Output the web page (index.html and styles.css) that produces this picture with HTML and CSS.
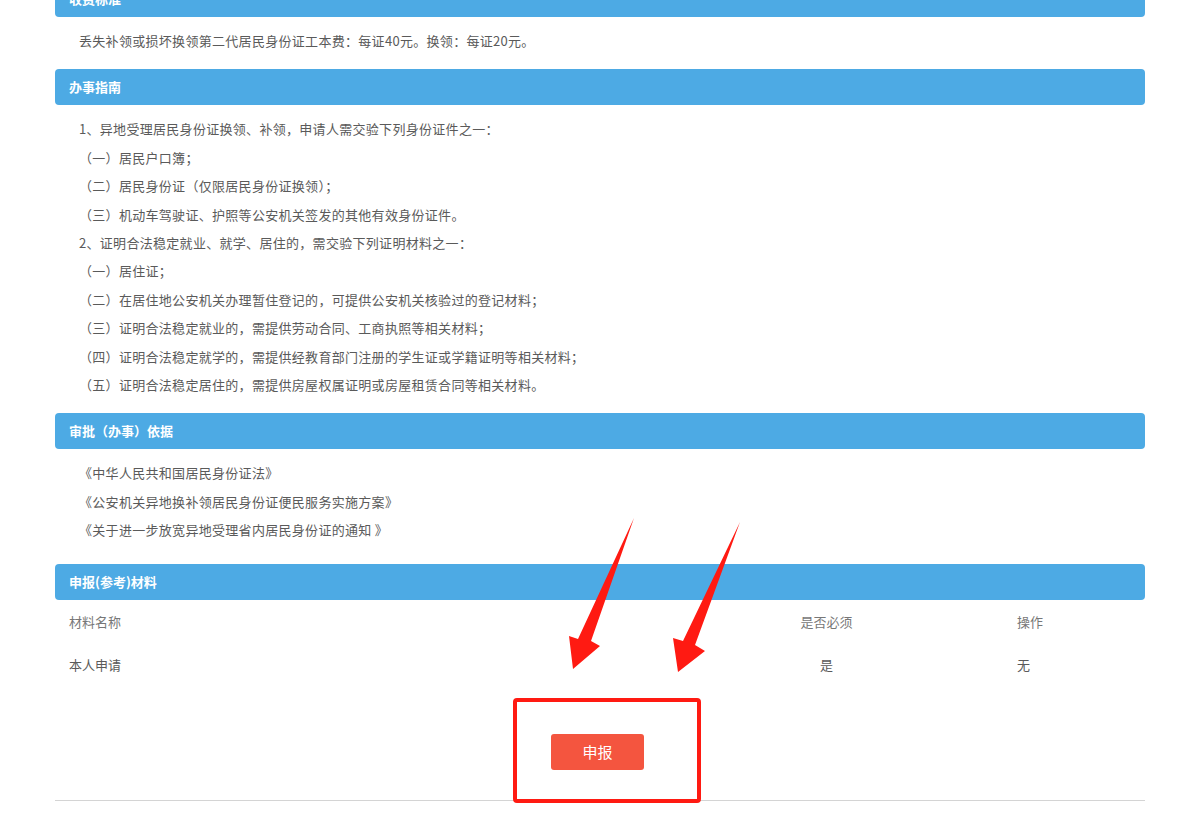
FILE: index.html
```html
<!DOCTYPE html>
<html lang="zh-CN">
<head>
<meta charset="utf-8">
<title>办事指南</title>
<link rel="stylesheet" href="styles.css">
</head>
<body>
<div class="page">
  <section class="sec">
    <div class="sec-head">收费标准</div>
    <div class="sec-body">
      <p>丢失补领或损坏换领第二代居民身份证工本费：每证40元。换领：每证20元。</p>
    </div>
  </section>

  <section class="sec">
    <div class="sec-head">办事指南</div>
    <div class="sec-body">
      <p>1、异地受理居民身份证换领、补领，申请人需交验下列身份证件之一：</p>
      <p>（一）居民户口簿；</p>
      <p>（二）居民身份证（仅限居民身份证换领）；</p>
      <p>（三）机动车驾驶证、护照等公安机关签发的其他有效身份证件。</p>
      <p>2、证明合法稳定就业、就学、居住的，需交验下列证明材料之一：</p>
      <p>（一）居住证；</p>
      <p>（二）在居住地公安机关办理暂住登记的，可提供公安机关核验过的登记材料；</p>
      <p>（三）证明合法稳定就业的，需提供劳动合同、工商执照等相关材料；</p>
      <p>（四）证明合法稳定就学的，需提供经教育部门注册的学生证或学籍证明等相关材料；</p>
      <p>（五）证明合法稳定居住的，需提供房屋权属证明或房屋租赁合同等相关材料。</p>
    </div>
  </section>

  <section class="sec">
    <div class="sec-head">审批（办事）依据</div>
    <div class="sec-body sec-body-basis">
      <p>《中华人民共和国居民身份证法》</p>
      <p>《公安机关异地换补领居民身份证便民服务实施方案》</p>
      <p>《关于进一步放宽异地受理省内居民身份证的通知 》</p>
    </div>
  </section>

  <section class="sec">
    <div class="sec-head">申报(参考)材料</div>
    <div class="mtable">
      <div class="mrow mrow-head">
        <div class="mcell c1">材料名称</div>
        <div class="mcell c2">是否必须</div>
        <div class="mcell c3">操作</div>
      </div>
      <div class="mrow">
        <div class="mcell c1">本人申请</div>
        <div class="mcell c2">是</div>
        <div class="mcell c3">无</div>
      </div>
    </div>
  </section>

  <div class="actions">
    <button class="btn-apply" type="button">申报</button>
  </div>
  <div class="divider"></div>
</div>

<div class="overlay">
  <svg class="arrows" width="1200" height="819" viewBox="0 0 1200 819">
    <polygon fill="#ff1a12" points="634,518 591,641 600,646 573,669 569,636 578,639"/>
    <polygon fill="#ff1a12" points="740,522 695,645 705,651 678,672 673,638 683,641"/>
  </svg>
  <div class="mark-box"></div>
</div>
</body>
</html>
```

FILE: styles.css
```css
html, body {
  margin: 0;
  padding: 0;
  background: #fff;
}
body {
  position: relative;
  width: 1200px;
  height: 819px;
  overflow: hidden;
  font-family: "Noto Sans CJK SC", "Noto Sans", sans-serif;
  font-size: 13px;
  color: #5a5a5a;
}
.page {
  width: 1090px;
  margin: -19px auto 0;
}
.sec-head {
  height: 36px;
  line-height: 36px;
  background: #4daae4;
  color: #fff;
  font-weight: bold;
  font-size: 13px;
  padding-left: 14px;
  border-radius: 4px;
}
.sec-body {
  padding: 10px 24px 14px;
  letter-spacing: 0.3px;
}
.sec-body-basis {
  padding-bottom: 19px;
}
.sec-body p {
  margin: 0;
  line-height: 28.4px;
}
.mtable {
  color: #5a5a5a;
}
.mrow {
  display: grid;
  grid-template-columns: 595px 353px 1fr;
  height: 43px;
  align-items: center;
}
.mrow-head {
  color: #777;
}
.c1 { padding-left: 14px; }
.c2 { text-align: center; }
.c3 { padding-left: 14px; }
.actions {
  display: flex;
  justify-content: center;
  padding-top: 48px;
  padding-bottom: 30px;
}
.btn-apply {
  width: 93px;
  height: 36px;
  border: none;
  border-radius: 3px;
  background: #f4553f;
  color: #fff;
  font-family: "Noto Sans CJK SC", sans-serif;
  font-size: 15px;
  margin-right: 5px;
}
.divider {
  height: 1px;
  background: #d4d4d4;
}
.overlay {
  position: absolute;
  left: 0;
  top: 0;
  width: 1200px;
  height: 819px;
  pointer-events: none;
}
.arrows {
  position: absolute;
  left: 0;
  top: 0;
}
.mark-box {
  position: absolute;
  left: 513px;
  top: 698px;
  width: 180px;
  height: 97px;
  border: 4px solid #ff1a12;
  border-radius: 4px;
}
```
